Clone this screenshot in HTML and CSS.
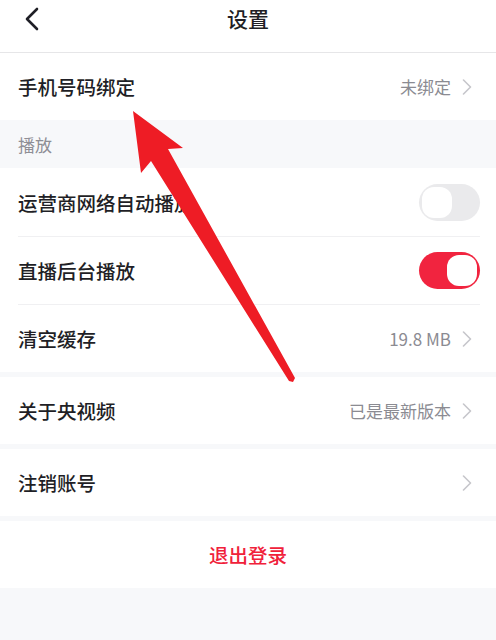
FILE: index.html
```html
<!DOCTYPE html>
<html lang="zh">
<head>
<meta charset="utf-8">
<title>设置</title>
<link rel="stylesheet" href="styles.css">
</head>
<body>
<div class="page">
  <header class="topbar">
    <svg class="back" width="14" height="24" viewBox="0 0 14 24"><polyline points="12,2 2,12 12,22" fill="none" stroke="#1f1f26" stroke-width="2.6" stroke-linecap="round" stroke-linejoin="round"/></svg>
    <h1 class="title">设置</h1>
  </header>

  <section class="group">
    <div class="row">
      <span class="label">手机号码绑定</span>
      <span class="value">未绑定</span>
      <svg class="chev" width="10" height="16" viewBox="0 0 10 16"><polyline points="1.5,1 8.5,8 1.5,15" fill="none" stroke="#c6c6cb" stroke-width="1.6" stroke-linecap="round" stroke-linejoin="round"/></svg>
    </div>
  </section>

  <div class="section-title">播放</div>

  <section class="group tall">
    <div class="row">
      <span class="label">运营商网络自动播放</span>
      <span class="toggle"><span class="knob"></span></span>
    </div>
    <div class="row">
      <span class="label">直播后台播放</span>
      <span class="toggle on"><span class="knob"></span></span>
    </div>
    <div class="row">
      <span class="label">清空缓存</span>
      <span class="value">19.8 MB</span>
      <svg class="chev" width="10" height="16" viewBox="0 0 10 16"><polyline points="1.5,1 8.5,8 1.5,15" fill="none" stroke="#c6c6cb" stroke-width="1.6" stroke-linecap="round" stroke-linejoin="round"/></svg>
    </div>
  </section>

  <section class="group gap">
    <div class="row">
      <span class="label">关于央视频</span>
      <span class="value">已是最新版本</span>
      <svg class="chev" width="10" height="16" viewBox="0 0 10 16"><polyline points="1.5,1 8.5,8 1.5,15" fill="none" stroke="#c6c6cb" stroke-width="1.6" stroke-linecap="round" stroke-linejoin="round"/></svg>
    </div>
  </section>

  <section class="group gap">
    <div class="row">
      <span class="label">注销账号</span>
      <svg class="chev" width="10" height="16" viewBox="0 0 10 16"><polyline points="1.5,1 8.5,8 1.5,15" fill="none" stroke="#c6c6cb" stroke-width="1.6" stroke-linecap="round" stroke-linejoin="round"/></svg>
    </div>
  </section>

  <section class="group gap logout-group">
    <div class="logout">退出登录</div>
  </section>

  <svg class="annotation" width="496" height="640" viewBox="0 0 496 640">
    <polygon points="133,111 183,148 168,149 295,378 293,382 289,381 151,161 141,173" fill="#ee1c25"/>
  </svg>
</div>
</body>
</html>
```

FILE: styles.css
```css
* { box-sizing: border-box; }

html, body {
  margin: 0;
  padding: 0;
}

body {
  background: #f7f8fa;
  font-family: "Noto Sans CJK SC", "Noto Sans", sans-serif;
  color: #1f1f26;
}

.page {
  position: relative;
  width: 496px;
  height: 640px;
  overflow: hidden;
}

.topbar {
  height: 53px;
  background: #fff;
  border-bottom: 1px solid #e6e6e8;
  display: flex;
  align-items: flex-start;
  justify-content: center;
  position: relative;
}

.back {
  position: absolute;
  left: 25px;
  top: 7px;
}

.title {
  margin: 0;
  font-size: 21px;
  font-weight: 500;
  line-height: 37px;
  color: #1f1f26;
}

.group {
  background: #fff;
}

.group.gap {
  margin-top: 5px;
}

.row {
  height: 67px;
  margin: 0 16px 0 18px;
  display: flex;
  align-items: center;
}

.group.tall .row {
  height: 68px;
}

.row + .row {
  border-top: 1px solid #f0f0f2;
}

.label {
  flex: 1;
  font-size: 19.5px;
  font-weight: 500;
  color: #1f1f26;
}

.value {
  font-size: 17px;
  color: #8b8b92;
  margin-right: 11px;
}

.chev {
  margin-right: 8px;
  display: block;
}

.section-title {
  height: 48px;
  padding-left: 18px;
  display: flex;
  align-items: center;
  font-size: 17px;
  color: #8e8e95;
}

.toggle {
  width: 61px;
  height: 37px;
  border-radius: 18.5px;
  background: #eaeaec;
  padding: 3px;
  display: flex;
}

.toggle .knob {
  width: 30px;
  height: 31px;
  border-radius: 12px;
  background: #fff;
}

.toggle.on {
  background: #f1243f;
  justify-content: flex-end;
}

.logout-group {
  margin-top: 6px;
}

.logout {
  height: 67px;
  display: flex;
  align-items: center;
  justify-content: center;
  font-size: 19.5px;
  font-weight: 500;
  color: #f0213a;
}

.annotation {
  position: absolute;
  left: 0;
  top: 0;
  pointer-events: none;
}
```
